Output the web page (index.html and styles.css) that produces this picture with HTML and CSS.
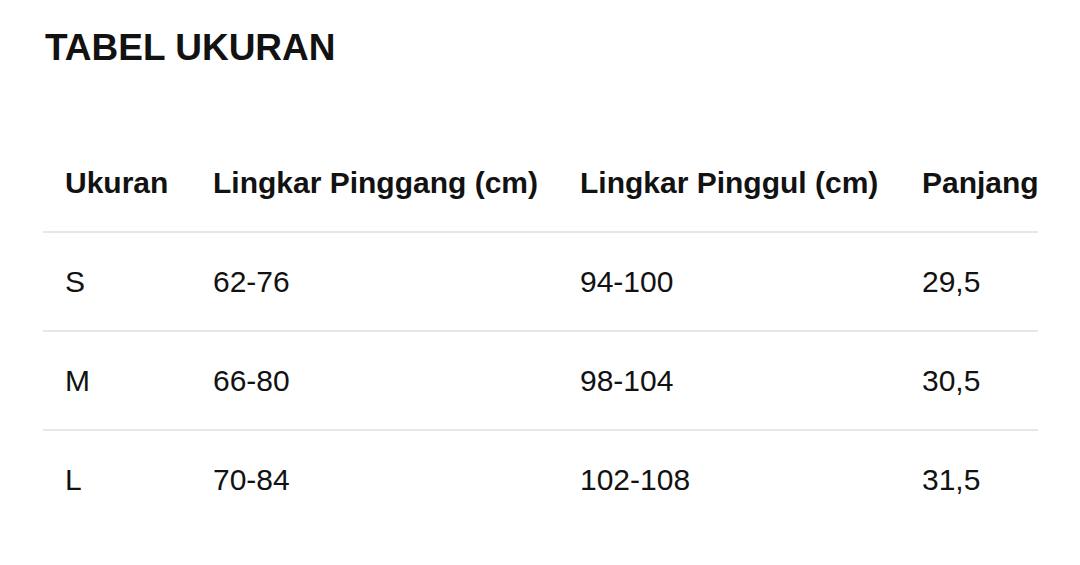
FILE: index.html
```html
<!DOCTYPE html>
<html lang="id">
<head>
<meta charset="utf-8">
<title>Tabel Ukuran</title>
<link rel="stylesheet" href="styles.css">
</head>
<body>
<main class="page">
  <h1 class="title">TABEL UKURAN</h1>
  <div class="table">
    <div class="row head">
      <div class="cell">Ukuran</div>
      <div class="cell">Lingkar Pinggang (cm)</div>
      <div class="cell">Lingkar Pinggul (cm)</div>
      <div class="cell">Panjang</div>
    </div>
    <div class="row">
      <div class="cell">S</div>
      <div class="cell">62-76</div>
      <div class="cell">94-100</div>
      <div class="cell">29,5</div>
    </div>
    <div class="row">
      <div class="cell">M</div>
      <div class="cell">66-80</div>
      <div class="cell">98-104</div>
      <div class="cell">30,5</div>
    </div>
    <div class="row last">
      <div class="cell">L</div>
      <div class="cell">70-84</div>
      <div class="cell">102-108</div>
      <div class="cell">31,5</div>
    </div>
  </div>
</main>
</body>
</html>
```
FILE: styles.css
```css
html, body {
  margin: 0;
  padding: 0;
  background: #ffffff;
}
body {
  font-family: "Liberation Sans", Arial, sans-serif;
  color: #121212;
}
.page {
  width: 1080px;
  height: 565px;
  overflow: hidden;
  padding: 29px 0 0 45px;
  box-sizing: border-box;
}
.title {
  margin: 0;
  font-size: 37px;
  line-height: 37px;
  font-weight: 700;
  letter-spacing: 0;
}
.table {
  margin-top: 69px;
  margin-left: -2px;
  width: 995px;
}
.row {
  display: grid;
  grid-template-columns: 148px 367px 342px 138px;
  height: 97px;
  align-items: center;
  border-bottom: 2px solid #e7e7e7;
}
.row.head {
  height: 96px;
}
.row.last {
  border-bottom: none;
}
.cell {
  padding-left: 22px;
  font-size: 30px;
  line-height: 30px;
  white-space: nowrap;
}
.head .cell {
  font-weight: 700;
}
```
